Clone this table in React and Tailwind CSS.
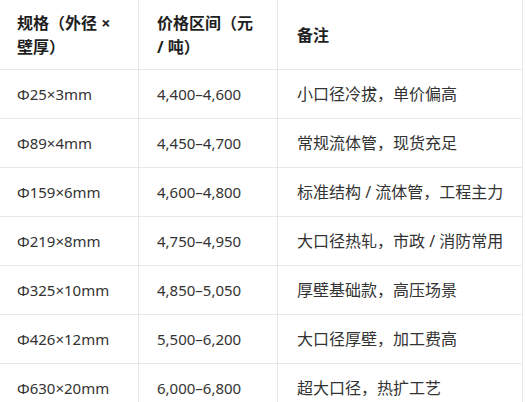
import React from "react";

const rows = [
  { spec: "Φ25×3mm", price: "4,400–4,600", note: "小口径冷拔，单价偏高" },
  { spec: "Φ89×4mm", price: "4,450–4,700", note: "常规流体管，现货充足" },
  { spec: "Φ159×6mm", price: "4,600–4,800", note: "标准结构 / 流体管，工程主力" },
  { spec: "Φ219×8mm", price: "4,750–4,950", note: "大口径热轧，市政 / 消防常用" },
  { spec: "Φ325×10mm", price: "4,850–5,050", note: "厚壁基础款，高压场景" },
  { spec: "Φ426×12mm", price: "5,500–6,200", note: "大口径厚壁，加工费高" },
  { spec: "Φ630×20mm", price: "6,000–6,800", note: "超大口径，热扩工艺" },
];

const th = "h-[70px] p-0 align-middle text-left font-bold text-[#1f1f1f] border-b border-[#e8e8e8]";
const td = "h-[49px] p-0 align-middle text-left text-[#333333] border-b border-[#e8e8e8]";

export default function App() {
  return (
    <div className="w-[525px] h-[402px] overflow-hidden bg-white">
      <table
        className="table-fixed border-separate border-spacing-0 w-[523px] text-[16px] leading-6"
        style={{ fontFamily: '"Noto Sans", "Noto Sans CJK SC", sans-serif' }}
      >
        <colgroup>
          <col className="w-[139px]" />
          <col className="w-[139px]" />
          <col className="w-[245px]" />
        </colgroup>
        <thead>
          <tr>
            <th className={`${th} pl-[17px] pr-[19px] border-r`}>规格（外径 × 壁厚）</th>
            <th className={`${th} pl-[18px] pr-[18px] border-r`}>价格区间（元 / 吨）</th>
            <th className={`${th} pl-[19px] pr-2 border-r`}>备注</th>
          </tr>
        </thead>
        <tbody>
          {rows.map(r => (
            <tr key={r.spec}>
              <td className={`${td} pl-[17px] text-[15px] border-r`}>{r.spec}</td>
              <td className={`${td} pl-[18px] text-[15px] border-r`}>{r.price}</td>
              <td className={`${td} pl-[19px] border-r`}>{r.note}</td>
            </tr>
          ))}
        </tbody>
      </table>
    </div>
  );
}
